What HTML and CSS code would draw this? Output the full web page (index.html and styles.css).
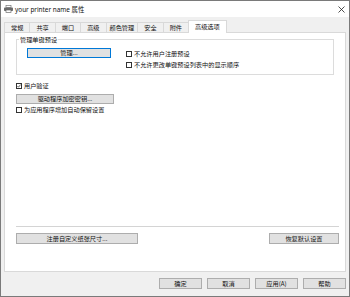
FILE: index.html
```html
<!DOCTYPE html>
<html lang="zh-CN">
<head>
  <meta charset="UTF-8" />
  <title>your printer name 属性</title>
  <link rel="stylesheet" href="styles.css">
</head>
<body>
  <div class="window">
    <div class="titlebar">
      <svg class="app-icon" width="9" height="8" viewBox="0 0 9 8">
        <rect x="2" y="0.5" width="5" height="2" fill="#fff" stroke="#777" stroke-width="0.7"/>
        <rect x="0" y="2.5" width="9" height="3.5" rx="0.8" fill="#6b6b6b"/>
        <rect x="2" y="5" width="5" height="2.6" fill="#fff" stroke="#6b6b6b" stroke-width="0.7"/>
      </svg>
      <span class="title">your printer name 属性</span>
      <svg class="close" width="7" height="7" viewBox="0 0 7 7">
        <path d="M0.5 0.5 L6.5 6.5 M6.5 0.5 L0.5 6.5" stroke="#222" stroke-width="0.8"/>
      </svg>
    </div>

    <div class="tabs">
      <div class="tab">常规</div>
      <div class="tab">共享</div>
      <div class="tab">端口</div>
      <div class="tab">高级</div>
      <div class="tab tab-tight">颜色管理</div>
      <div class="tab">安全</div>
      <div class="tab">附件</div>
      <div class="tab active">高级选项</div>
    </div>

    <div class="panel">
      <!-- 单键预设 -->
      <fieldset class="group">
        <legend>管理单键预设</legend>
        <div class="group-body">
          <button class="btn btn-default btn-manage">管理...</button>
          <div class="checks">
            <label class="check"><span class="box"></span>不允许用户注册预设</label>
            <label class="check"><span class="box"></span>不允许更改单键预设列表中的显示顺序</label>
          </div>
        </div>
      </fieldset>

      <label class="check check-auth">
        <span class="box">
          <svg width="4" height="4" viewBox="0 0 4 4"><path d="M0.4 2 L1.5 3.2 L3.6 0.6" fill="none" stroke="#222" stroke-width="0.7"/></svg>
        </span>用户验证
      </label>
      <button class="btn btn-key">驱动程序加密密钥...</button>
      <label class="check"><span class="box"></span>为应用程序增加自动保留设置</label>

      <div class="spacer"></div>
      <div class="sep"></div>
      <div class="panel-actions">
        <button class="btn btn-paper">注册自定义纸张尺寸...</button>
        <button class="btn btn-reset">恢复默认设置</button>
      </div>
    </div>

    <div class="footer">
      <button class="btn btn-dialog">确定</button>
      <button class="btn btn-dialog">取消</button>
      <button class="btn btn-dialog">应用(A)</button>
      <button class="btn btn-dialog">帮助</button>
    </div>
  </div>
</body>
</html>
```

FILE: styles.css
```css
body {
  margin: 0;
  font-family: "Noto Sans CJK SC", sans-serif;
  font-size: 6.2px;
  color: #111;
}

.window {
  width: 350px;
  height: 297px;
  box-sizing: border-box;
  border: 1px solid #7a7a7a;
  background: #f0f0f0;
  display: flex;
  flex-direction: column;
}

.titlebar {
  height: 16px;
  background: #fff;
  display: flex;
  align-items: center;
  padding: 0 4px 0 3px;
}

.app-icon {
  margin-right: 2px;
}

.title {
  flex: 1;
  font-family: "Noto Sans", "Noto Sans CJK SC", sans-serif;
  font-size: 6.4px;
}

.tabs {
  height: 15px;
  display: flex;
  align-items: flex-end;
  padding-left: 3px;
}

.tab {
  height: 10px;
  box-sizing: border-box;
  padding: 0 6px;
  line-height: 9px;
  border: 1px solid #d9d9d9;
  border-bottom: none;
  margin-right: -1px;
  background: #f0f0f0;
}

.tab-tight {
  padding: 0 3px;
}

.tab.active {
  height: 13px;
  line-height: 12px;
  background: #fff;
  margin-bottom: -1px;
  position: relative;
  z-index: 1;
}

.panel {
  height: 240px;
  box-sizing: border-box;
  margin: 0 3px;
  border: 1px solid #d9d9d9;
  background: #fff;
  padding: 3px 6px 27px 11px;
  display: flex;
  flex-direction: column;
  align-items: flex-start;
}

.group {
  align-self: stretch;
  margin: 0 5px 0 0;
  padding: 0 0 0 2px;
  border: 1px solid #dcdcdc;
  min-inline-size: 0;
}

.group legend {
  padding: 0 1px;
  line-height: 7px;
}

.group-body {
  display: flex;
  align-items: flex-start;
  padding: 5px 0 4px 8px;
}

.checks {
  display: flex;
  flex-direction: column;
  margin-left: 15px;
}

.check {
  display: flex;
  align-items: center;
  height: 11px;
  white-space: nowrap;
}

.box {
  width: 6px;
  height: 6px;
  box-sizing: border-box;
  border: 1px solid #333;
  margin-right: 2px;
  display: flex;
  align-items: center;
  justify-content: center;
}

.check-auth {
  margin-top: 5px;
}

.btn {
  font-family: inherit;
  font-size: 6.2px;
  color: #111;
  height: 10px;
  line-height: 8px;
  padding: 0;
  border: 1px solid #adadad;
  background: #e1e1e1;
  border-radius: 0;
}

.btn-default {
  border-color: #0078d7;
}

.btn-manage {
  width: 84px;
}

.btn-key {
  width: 98px;
  margin-top: 3px;
}

.spacer {
  flex: 1;
}

.sep {
  align-self: stretch;
  border-top: 1px solid #d4d4d4;
  margin-bottom: 6px;
}

.panel-actions {
  align-self: stretch;
  display: flex;
  justify-content: space-between;
}

.btn-paper {
  width: 122px;
  height: 11px;
}

.btn-reset {
  width: 70px;
  height: 11px;
}

.footer {
  flex: 1;
  display: flex;
  justify-content: flex-end;
  align-items: flex-start;
  gap: 5px;
  padding: 6px 3px 0 0;
}

.btn-dialog {
  width: 43px;
  height: 11px;
}
```
